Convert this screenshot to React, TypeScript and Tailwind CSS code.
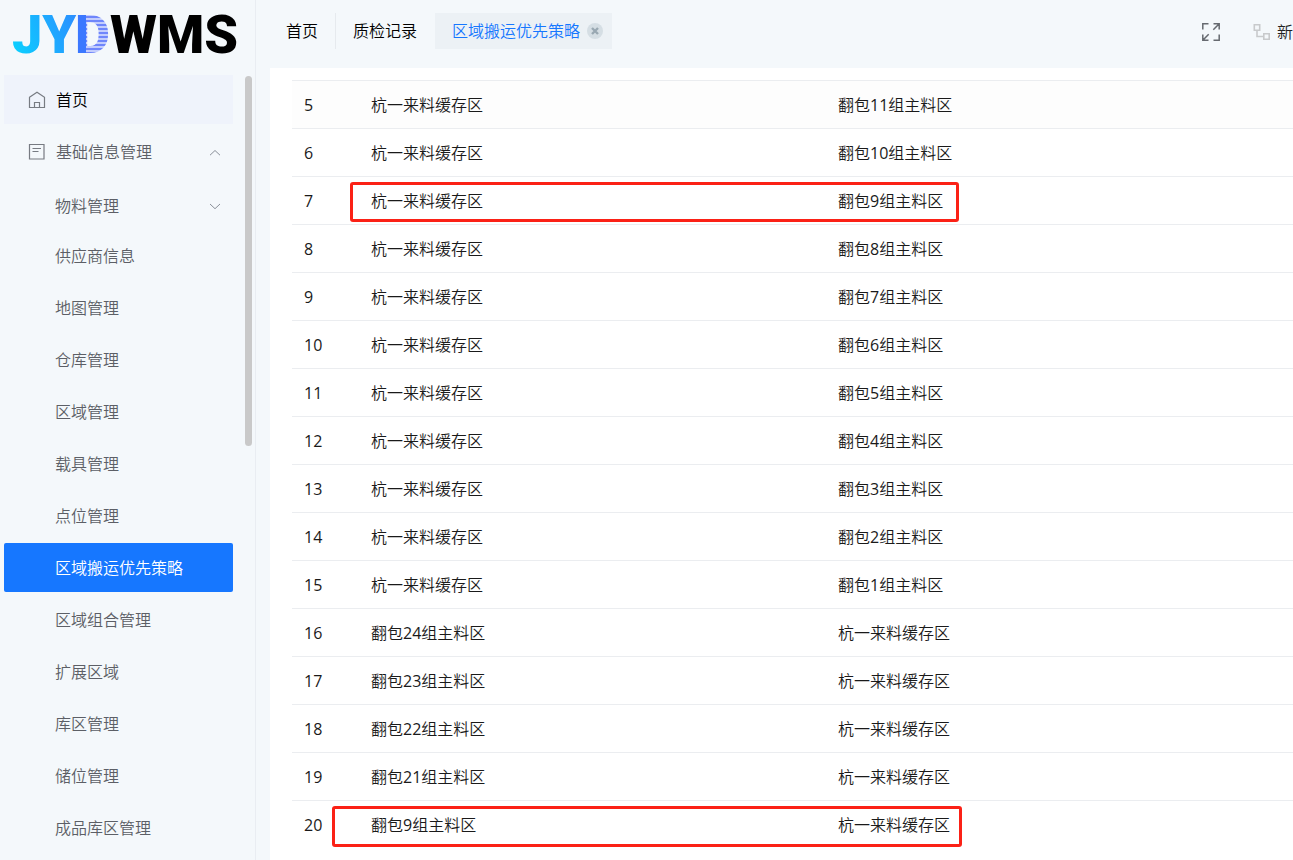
import React, { useState } from "react";
import { clsx } from "clsx";

const FONT = "font-['Open_Sans','Noto_Sans_CJK_SC_DemiLight','Noto_Sans_CJK_SC',sans-serif]";

const subMenu = [
  "供应商信息",
  "地图管理",
  "仓库管理",
  "区域管理",
  "载具管理",
  "点位管理",
  "区域搬运优先策略",
  "区域组合管理",
  "扩展区域",
  "库区管理",
  "储位管理",
  "成品库区管理",
];

const BUFFER = "杭一来料缓存区";

type Row = { id: number; from: string; to: string; mark?: string };

const rows: Row[] = [
  { id: 5, from: BUFFER, to: "翻包11组主料区" },
  { id: 6, from: BUFFER, to: "翻包10组主料区" },
  { id: 7, from: BUFFER, to: "翻包9组主料区", mark: "-left-[9px] -right-[133px]" },
  { id: 8, from: BUFFER, to: "翻包8组主料区" },
  { id: 9, from: BUFFER, to: "翻包7组主料区" },
  { id: 10, from: BUFFER, to: "翻包6组主料区" },
  { id: 11, from: BUFFER, to: "翻包5组主料区" },
  { id: 12, from: BUFFER, to: "翻包4组主料区" },
  { id: 13, from: BUFFER, to: "翻包3组主料区" },
  { id: 14, from: BUFFER, to: "翻包2组主料区" },
  { id: 15, from: BUFFER, to: "翻包1组主料区" },
  { id: 16, from: "翻包24组主料区", to: BUFFER },
  { id: 17, from: "翻包23组主料区", to: BUFFER },
  { id: 18, from: "翻包22组主料区", to: BUFFER },
  { id: 19, from: "翻包21组主料区", to: BUFFER },
  { id: 20, from: "翻包9组主料区", to: BUFFER, mark: "-left-[27px] -right-[136px]" },
];

function Logo() {
  return (
    <svg
      width="232"
      height="56"
      viewBox="0 0 232 56"
      role="img"
      aria-label="JYDWMS"
      className="overflow-visible font-['Roboto'] font-black"
    >
      <defs>
        <linearGradient id="jy" gradientUnits="userSpaceOnUse" x1="0" y1="40" x2="75" y2="10">
          <stop offset="0" stopColor="#0bd0ff" />
          <stop offset="1" stopColor="#2f86ff" />
        </linearGradient>
        <pattern id="stripes" patternUnits="userSpaceOnUse" width="120" height="4">
          <rect width="120" height="4" fill="#c3cdfd" />
          <rect width="120" height="2" fill="#6f86fb" />
          <rect width="74" height="4" fill="#3b78ff" />
        </pattern>
      </defs>
      <text x="0" y="45" fontSize="54" fill="url(#jy)">JY</text>
      <text x="63" y="45" fontSize="54" fill="url(#stripes)">D</text>
      <text x="98" y="45" fontSize="54" fill="#000">WMS</text>
    </svg>
  );
}

function HomeIcon() {
  return (
    <svg width="18" height="18" viewBox="0 0 18 18" fill="none" stroke="currentColor" strokeWidth="1.2">
      <path d="M1.5 6.2 9 1.2l7.5 5v10.3h-15z" />
      <path d="M6.5 16.5v-5h5v5" />
    </svg>
  );
}

function DocIcon() {
  return (
    <svg width="18" height="18" viewBox="0 0 18 18" fill="none" stroke="currentColor" strokeWidth="1.2">
      <path d="M1.5 1.5h14.5v14.5H1.5zM4.5 5.5h8.5M4.5 8.5h6" />
    </svg>
  );
}

function Chevron({ up }: { up?: boolean }) {
  return (
    <svg width="12" height="12" viewBox="0 0 12 12" fill="none" stroke="currentColor" strokeWidth="1">
      <path d={up ? "M1 9.2 6 4.5l5 4.7" : "M1 4 6 8.7 11 4"} />
    </svg>
  );
}

function FullscreenIcon() {
  return (
    <svg width="20" height="20" viewBox="0 0 20 20" fill="none" stroke="currentColor" strokeWidth="1.5">
      <path d="M1.8 7.5V1.8h5.7M12.5 1.8h5.7v5.7M18.2 1.8l-5.9 5.9M18.2 12.5v5.7h-5.7M7.5 18.2H1.8v-5.7M1.8 18.2l5.9-5.9" />
    </svg>
  );
}

function NodesIcon() {
  return (
    <svg width="18" height="18" viewBox="0 0 18 18" fill="none" stroke="currentColor" strokeWidth="1.6">
      <path d="M1.3 1.8h5.4v5.4H1.3zM10.8 10.8h5.4v5.4h-5.4zM4 7.2v6.3h6.8" />
    </svg>
  );
}

function Sidebar({ active, onSelect }: { active: string; onSelect: (name: string) => void }) {
  return (
    <aside className="relative flex w-64 shrink-0 flex-col border-r border-[#e9edf2] pl-1">
      <div className="flex h-[75px] shrink-0 items-start pt-2 pl-2">
        <Logo />
      </div>
      <nav className="mr-[22px] flex min-h-0 flex-1 flex-col overflow-hidden text-[#5c5f66]">
        <button className="flex h-[49px] shrink-0 items-center gap-[10px] bg-[#eff3fb] pl-6 text-black">
          <span className="text-[#777b82]"><HomeIcon /></span>
          首页
        </button>
        <button aria-expanded="true" className="mt-[3px] flex h-[49px] shrink-0 items-center gap-[10px] pr-3 pl-6">
          <span className="text-[#777b82]"><DocIcon /></span>
          基础信息管理
          <span className="ml-auto text-[#8a9099]"><Chevron up /></span>
        </button>
        <ul className="mt-2 flex flex-col gap-[3px]">
          <li>
            <button aria-expanded="false" className="flex h-11 w-full items-center justify-between pr-3 pl-[51px]">
              物料管理
              <span className="text-[#8a9099]"><Chevron /></span>
            </button>
          </li>
          {subMenu.map((name) => (
            <li key={name}>
              <button
                onClick={() => onSelect(name)}
                className={clsx(
                  "flex h-[49px] w-full items-center rounded-xs pl-[51px]",
                  name === active && "bg-[#1677ff] text-white"
                )}
              >
                {name}
              </button>
            </li>
          ))}
        </ul>
      </nav>
      <div className="absolute top-[76px] right-[3px] h-[43%] w-[7px] rounded-full bg-[#c9c9c9]" />
    </aside>
  );
}

function TopBar() {
  return (
    <header className="flex h-[68px] shrink-0 items-start overflow-hidden pt-[13px] pl-[13px] text-black">
      <div className="flex h-9 items-stretch">
        <button className="border-r border-[#e6eaee] px-[17px]">首页</button>
        <button className="px-[17px]">质检记录</button>
        <div className="ml-px flex items-center gap-[7px] bg-[#ecf1f5] pr-[9px] pl-[17px] text-[#1677ff]">
          <button>区域搬运优先策略</button>
          <button aria-label="关闭" className="flex size-4 items-center justify-center rounded-full bg-[#d5dee4] text-[#99a8b2]">
            <svg width="8" height="8" viewBox="0 0 8 8" stroke="currentColor" strokeWidth="2.4">
              <path d="M1 1l6 6M7 1 1 7" />
            </svg>
          </button>
        </div>
      </div>
      <div className="ml-auto flex h-[38px] items-center">
        <button aria-label="全屏" className="mr-8 text-[#666a70]"><FullscreenIcon /></button>
        <button className="flex items-center gap-[6px] text-[#222]">
          <span className="text-[#c8cacc]"><NodesIcon /></span>
          新
        </button>
      </div>
    </header>
  );
}

export default function App() {
  const [active, setActive] = useState("区域搬运优先策略");

  return (
    <div className={clsx("flex h-screen overflow-hidden bg-[#f4f8fb] text-base", FONT)}>
      <Sidebar active={active} onSelect={setActive} />
      <div className="flex min-w-0 flex-1 flex-col">
        <TopBar />
        <main className="ml-[14px] min-h-0 flex-1 overflow-hidden bg-white pt-3 pl-[22px]">
          <table className="w-full table-fixed text-left text-[#1a1a1a]">
            <colgroup>
              <col className="w-[67px]" />
              <col />
              <col />
            </colgroup>
            <tbody>
              {rows.map((row) => (
                <tr key={row.id} className="h-12 border-t border-[#ebedf0] first:bg-[#fdfdfd]">
                  <td className="px-3">{row.id}</td>
                  <td className="relative px-3">
                    {row.from}
                    {row.mark && (
                      <div className={clsx("absolute top-[5px] bottom-[2px] rounded-[3px] border-3 border-[#fb2116]", row.mark)} />
                    )}
                  </td>
                  <td className="px-3">{row.to}</td>
                </tr>
              ))}
            </tbody>
          </table>
        </main>
      </div>
    </div>
  );
}
